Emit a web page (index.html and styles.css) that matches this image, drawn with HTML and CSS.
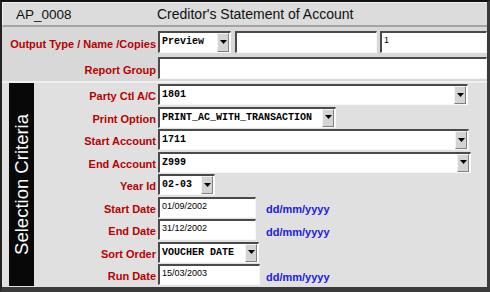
FILE: index.html
```html
<!DOCTYPE html>
<html>
<head>
<meta charset="utf-8">
<link rel="stylesheet" href="styles.css">
</head>
<body>
<div class="frame">
  <div class="titlebar">
    <span class="code">AP_0008</span>
    <span class="title">Creditor's Statement of Account</span>
  </div>
  <div class="upper">
    <div class="label">Output Type / Name /Copies</div>
    <div class="field row-fields">
      <div class="select w-preview"><span class="val mono">Preview</span><span class="btn"><svg width="7" height="5" viewBox="0 0 7 5"><path d="M0 0H7L3.5 4Z" fill="#000"/></svg></span></div>
      <div class="input w-name"></div>
      <div class="input grow"><span class="val small">1</span></div>
    </div>
    <div class="label">Report Group</div>
    <div class="field"><div class="input grow"></div></div>
  </div>
  <div class="lower">
    <div class="sidebar"><span class="vtext">Selection Criteria</span></div>
    <div class="form">
      <div class="label">Party Ctl A/C</div>
      <div class="field"><div class="select w-party"><span class="val mono">1801</span><span class="btn"><svg width="7" height="5" viewBox="0 0 7 5"><path d="M0 0H7L3.5 4Z" fill="#000"/></svg></span></div></div>

      <div class="label">Print Option</div>
      <div class="field"><div class="select w-print"><span class="val mono">PRINT_AC_WITH_TRANSACTION</span><span class="btn"><svg width="7" height="5" viewBox="0 0 7 5"><path d="M0 0H7L3.5 4Z" fill="#000"/></svg></span></div></div>

      <div class="label">Start Account</div>
      <div class="field"><div class="select w-start"><span class="val mono">1711</span><span class="btn"><svg width="7" height="5" viewBox="0 0 7 5"><path d="M0 0H7L3.5 4Z" fill="#000"/></svg></span></div></div>

      <div class="label">End Account</div>
      <div class="field"><div class="select w-end"><span class="val mono">Z999</span><span class="btn"><svg width="7" height="5" viewBox="0 0 7 5"><path d="M0 0H7L3.5 4Z" fill="#000"/></svg></span></div></div>

      <div class="label">Year Id</div>
      <div class="field"><div class="select w-year"><span class="val mono">02-03</span><span class="btn"><svg width="7" height="5" viewBox="0 0 7 5"><path d="M0 0H7L3.5 4Z" fill="#000"/></svg></span></div></div>

      <div class="label">Start Date</div>
      <div class="field datefield"><div class="input w-date"><span class="val small">01/09/2002</span></div><span class="hint">dd/mm/yyyy</span></div>

      <div class="label">End Date</div>
      <div class="field datefield"><div class="input w-date"><span class="val small">31/12/2002</span></div><span class="hint">dd/mm/yyyy</span></div>

      <div class="label">Sort Order</div>
      <div class="field"><div class="select w-sort"><span class="val mono">VOUCHER DATE</span><span class="btn"><svg width="7" height="5" viewBox="0 0 7 5"><path d="M0 0H7L3.5 4Z" fill="#000"/></svg></span></div></div>

      <div class="label">Run Date</div>
      <div class="field datefield"><div class="input w-run"><span class="val small">15/03/2003</span></div><span class="hint">dd/mm/yyyy</span></div>
    </div>
  </div>
</div>
</body>
</html>
```

FILE: styles.css
```css
html, body {
  margin: 0;
  padding: 0;
  background: #3a3a3a;
}
.frame {
  width: 490px;
  height: 292px;
  box-sizing: border-box;
  border-top: 2px solid #111;
  border-left: 2px solid #222;
  border-right: 3px solid #3a3a3a;
  border-bottom: 5px solid #3a3a3a;
  background: #e0e0e0;
  display: flex;
  flex-direction: column;
  overflow: hidden;
  font-family: "Liberation Sans", Arial, sans-serif;
}
.titlebar {
  height: 25px;
  box-sizing: border-box;
  flex: none;
  display: flex;
  align-items: center;
  background: #dcdcdc;
  border-left: 1px solid #f2f2f2;
  border-top: 1px solid #f2f2f2;
  border-bottom: 2px solid #a4a4a4;
  font-size: 14px;
  color: #111;
  padding-left: 13px;
}
.titlebar .code {
  width: 141px;
  font-size: 13.5px;
}
.upper {
  flex: none;
  display: grid;
  grid-template-columns: 154px 1fr;
  grid-auto-rows: 22px;
  column-gap: 2px;
  row-gap: 4px;
  padding: 4px 0 2px 0;
  background: #d8d8d8;
  border-bottom: 2px solid #f0f0f0;
}
.label {
  color: #b80000;
  font-weight: bold;
  font-size: 11px;
  text-align: right;
  display: flex;
  align-items: center;
  justify-content: flex-end;
  padding-top: 3px;
  box-sizing: border-box;
  white-space: nowrap;
}
.field {
  display: flex;
  align-items: stretch;
  min-width: 0;
}
.row-fields {
  gap: 0;
}
.input, .select {
  box-sizing: border-box;
  background: #fff;
  border-top: 2px solid #4a4a4a;
  border-left: 2px solid #4a4a4a;
  border-bottom: 1px solid #f8f8f8;
  border-right: 1px solid #f8f8f8;
  display: flex;
  align-items: flex-start;
  position: relative;
  overflow: hidden;
}
.grow {
  flex: 1;
}
.w-preview { width: 73px; margin-right: 4px; }
.w-name { width: 142px; margin-right: 3px; }
.val {
  padding: 3px 0 0 2px;
  white-space: nowrap;
  color: #000;
}
.mono {
  font-family: "Liberation Mono", "Courier New", monospace;
  font-weight: bold;
  font-size: 10px;
  line-height: 11px;
}
.small {
  font-size: 9px;
  line-height: 10px;
  padding-top: 2px;
}
.select .val {
  flex: 1;
}
.btn {
  flex: none;
  width: 12px;
  margin: 0 1px 0 0;
  box-sizing: border-box;
  background: #d4d4d4;
  border-top: 1px solid #f4f4f4;
  border-left: 1px solid #f4f4f4;
  border-bottom: 1px solid #808080;
  border-right: 1px solid #808080;
  display: flex;
  align-items: center;
  justify-content: center;
  align-self: stretch;
}
.btn svg { display: block; }
.lower {
  flex: 1;
  display: flex;
  padding-left: 7px;
  background: #e0e0e0;
}
.sidebar {
  width: 25px;
  flex: none;
  background: #080808;
  margin-bottom: 1px;
  display: flex;
  align-items: center;
  justify-content: center;
}
.vtext {
  writing-mode: vertical-rl;
  transform: rotate(180deg);
  color: #fff;
  font-size: 18.5px;
  white-space: nowrap;
  line-height: 24px;
}
.form {
  flex: 1;
  display: grid;
  grid-template-columns: 122px 1fr;
  grid-auto-rows: 21px;
  column-gap: 2px;
  row-gap: 1.5px;
  padding-top: 1px;
}
.w-party { width: 310px; }
.w-print { width: 178px; }
.w-start { width: 311px; }
.w-end { width: 313px; }
.w-year { width: 57px; }
.w-sort { width: 101px; }
.datefield {
  display: grid;
  grid-template-columns: 108px auto;
  align-items: stretch;
}
.w-date { width: 98px; }
.w-run { width: 102px; }
.hint {
  color: #2020e0;
  font-weight: bold;
  font-size: 11px;
  display: flex;
  align-items: center;
  padding-top: 4px;
}
```
